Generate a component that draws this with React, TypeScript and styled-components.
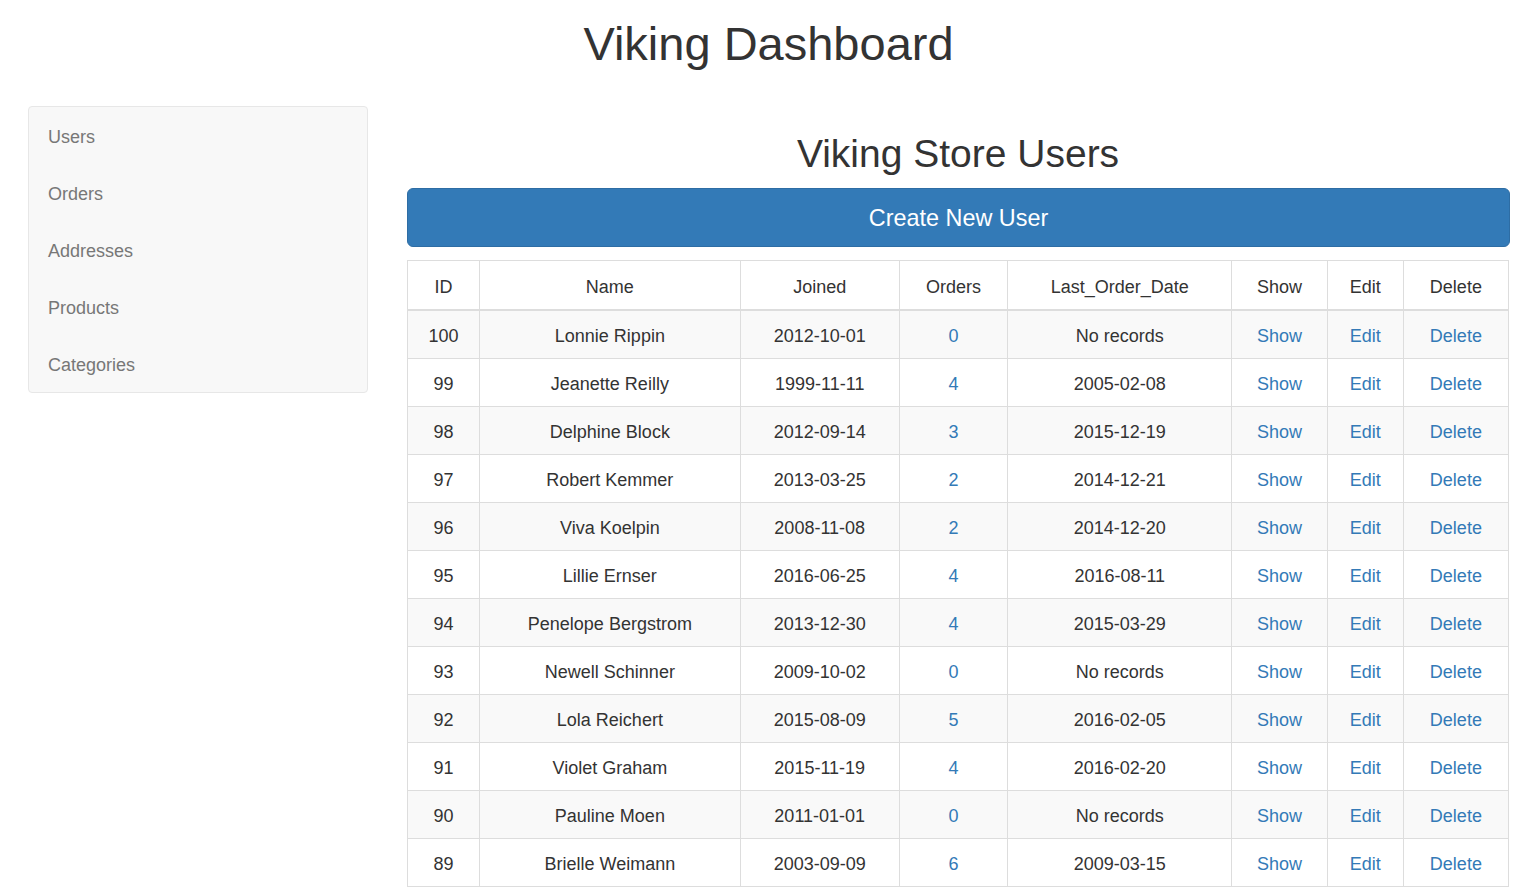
import React from "react";
import styled, { createGlobalStyle } from "styled-components";

const GlobalStyle = createGlobalStyle`
  html, body { margin: 0; padding: 0; background: #fff; }
  body {
    font-family: "Liberation Sans", Arial, Helvetica, sans-serif;
    font-size: 18px;
    line-height: 1.42857;
    color: #333;
  }
  * { box-sizing: border-box; }
`;

const Page = styled.div`
  padding: 0 31px 0 28px;
`;

const Title = styled.h1`
  margin: 18px 0 0;
  font-size: 47px;
  font-weight: 500;
  line-height: 51px;
  text-align: center;
  color: #333;
`;

const Layout = styled.div`
  display: flex;
  align-items: flex-start;
  gap: 39px;
  margin-top: 37px;
`;

const Sidebar = styled.nav`
  width: 340px;
  flex: none;
  background: #f8f8f8;
  border: 1px solid #e7e7e7;
  border-radius: 4px;
  display: flex;
  flex-direction: column;
`;

const SideLink = styled.a`
  display: block;
  padding: 18px 19px 14px;
  line-height: 25px;
  color: #777;
  text-decoration: none;
  font-size: 18px;
`;

const Main = styled.main`
  flex: 1;
  min-width: 0;
`;

const SubTitle = styled.h2`
  margin: 27px 0 13px;
  font-size: 39px;
  font-weight: 500;
  line-height: 42px;
  text-align: center;
  color: #333;
`;

const PrimaryButton = styled.button`
  display: block;
  width: calc(100% + 1px);
  padding: 14px 20px 12px;
  line-height: 31px;
  font-family: inherit;
  font-size: 23.4px;
  color: #fff;
  background: #337ab7;
  border: 1px solid #2e6da4;
  border-radius: 6px;
  cursor: pointer;
  margin-bottom: 13px;
`;

const Table = styled.table`
  width: 100%;
  border-collapse: collapse;
  border: 1px solid #ddd;
  table-layout: fixed;
`;

const Th = styled.th`
  padding: 14px 11px 9px;
  line-height: 25px;
  font-weight: normal;
  text-align: center;
  border: 1px solid #ddd;
  border-bottom: 2px solid #ddd;
  color: #333;
`;

const Row = styled.tr<{ $striped: boolean }>`
  background: ${(p) => (p.$striped ? "#f9f9f9" : "#fff")};
`;

const Td = styled.td`
  padding: 13px 11px 9px;
  line-height: 25px;
  text-align: center;
  border: 1px solid #ddd;
  color: #333;
  white-space: nowrap;
`;

const Link = styled.a`
  color: #337ab7;
  text-decoration: none;
`;

type User = {
  id: number;
  name: string;
  joined: string;
  orders: number;
  last: string;
};

const users: User[] = [
  { id: 100, name: "Lonnie Rippin", joined: "2012-10-01", orders: 0, last: "No records" },
  { id: 99, name: "Jeanette Reilly", joined: "1999-11-11", orders: 4, last: "2005-02-08" },
  { id: 98, name: "Delphine Block", joined: "2012-09-14", orders: 3, last: "2015-12-19" },
  { id: 97, name: "Robert Kemmer", joined: "2013-03-25", orders: 2, last: "2014-12-21" },
  { id: 96, name: "Viva Koelpin", joined: "2008-11-08", orders: 2, last: "2014-12-20" },
  { id: 95, name: "Lillie Ernser", joined: "2016-06-25", orders: 4, last: "2016-08-11" },
  { id: 94, name: "Penelope Bergstrom", joined: "2013-12-30", orders: 4, last: "2015-03-29" },
  { id: 93, name: "Newell Schinner", joined: "2009-10-02", orders: 0, last: "No records" },
  { id: 92, name: "Lola Reichert", joined: "2015-08-09", orders: 5, last: "2016-02-05" },
  { id: 91, name: "Violet Graham", joined: "2015-11-19", orders: 4, last: "2016-02-20" },
  { id: 90, name: "Pauline Moen", joined: "2011-01-01", orders: 0, last: "No records" },
  { id: 89, name: "Brielle Weimann", joined: "2003-09-09", orders: 6, last: "2009-03-15" },
];

const cols = [72, 260, 159, 108, 224, 95, 76, 105];
const headers = ["ID", "Name", "Joined", "Orders", "Last_Order_Date", "Show", "Edit", "Delete"];
const nav = ["Users", "Orders", "Addresses", "Products", "Categories"];

export default function App() {
  return (
    <>
      <GlobalStyle />
      <Page>
        <Title>Viking Dashboard</Title>
        <Layout>
          <Sidebar>
            {nav.map((n) => (
              <SideLink key={n} href="#">
                {n}
              </SideLink>
            ))}
          </Sidebar>
          <Main>
            <SubTitle>Viking Store Users</SubTitle>
            <PrimaryButton>Create New User</PrimaryButton>
            <Table>
              <colgroup>
                {cols.map((w, i) => (
                  <col key={i} style={{ width: w }} />
                ))}
              </colgroup>
              <thead>
                <tr>
                  {headers.map((h) => (
                    <Th key={h}>{h}</Th>
                  ))}
                </tr>
              </thead>
              <tbody>
                {users.map((u, i) => (
                  <Row key={u.id} $striped={i % 2 === 0}>
                    <Td>{u.id}</Td>
                    <Td>{u.name}</Td>
                    <Td>{u.joined}</Td>
                    <Td>
                      <Link href="#">{u.orders}</Link>
                    </Td>
                    <Td>{u.last}</Td>
                    <Td>
                      <Link href="#">Show</Link>
                    </Td>
                    <Td>
                      <Link href="#">Edit</Link>
                    </Td>
                    <Td>
                      <Link href="#">Delete</Link>
                    </Td>
                  </Row>
                ))}
              </tbody>
            </Table>
          </Main>
        </Layout>
      </Page>
    </>
  );
}
